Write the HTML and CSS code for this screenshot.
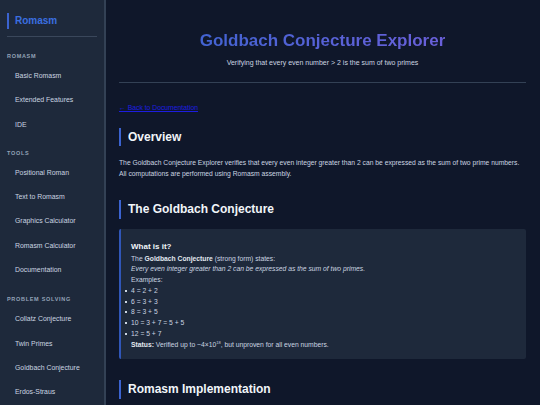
FILE: index.html
```html
<!DOCTYPE html>
<html lang="en">
<head>
<meta charset="utf-8">
<title>Goldbach Conjecture Explorer</title>
<link rel="stylesheet" href="styles.css">
</head>
<body>
<div class="app">
  <aside class="sidebar">
    <div class="brand">Romasm</div>
    <div class="group">
      <div class="group-label">Romasm</div>
      <a class="nav-item" href="#">Basic Romasm</a>
      <a class="nav-item" href="#">Extended Features</a>
      <a class="nav-item" href="#">IDE</a>
    </div>
    <div class="group">
      <div class="group-label">Tools</div>
      <a class="nav-item" href="#">Positional Roman</a>
      <a class="nav-item" href="#">Text to Romasm</a>
      <a class="nav-item" href="#">Graphics Calculator</a>
      <a class="nav-item" href="#">Romasm Calculator</a>
      <a class="nav-item" href="#">Documentation</a>
    </div>
    <div class="group">
      <div class="group-label">Problem Solving</div>
      <a class="nav-item" href="#">Collatz Conjecture</a>
      <a class="nav-item" href="#">Twin Primes</a>
      <a class="nav-item" href="#">Goldbach Conjecture</a>
      <a class="nav-item" href="#">Erdos-Straus</a>
    </div>
  </aside>
  <main class="main">
    <header class="page-header">
      <h1 class="title">Goldbach Conjecture Explorer</h1>
      <p class="subtitle">Verifying that every even number &gt; 2 is the sum of two primes</p>
    </header>
    <a class="back-link" href="#">← Back to Documentation</a>
    <h2 class="section-title first">Overview</h2>
    <p class="text">The Goldbach Conjecture Explorer verifies that every even integer greater than 2 can be expressed as the sum of two prime numbers. All computations are performed using Romasm assembly.</p>
    <h2 class="section-title">The Goldbach Conjecture</h2>
    <div class="info-box">
      <h3 class="info-title">What is it?</h3>
      <p class="info-line">The <strong>Goldbach Conjecture</strong> (strong form) states:</p>
      <p class="info-line"><em>Every even integer greater than 2 can be expressed as the sum of two primes.</em></p>
      <p class="info-line">Examples:</p>
      <ul class="examples">
        <li>4 = 2 + 2</li>
        <li>6 = 3 + 3</li>
        <li>8 = 3 + 5</li>
        <li>10 = 3 + 7 = 5 + 5</li>
        <li>12 = 5 + 7</li>
      </ul>
      <p class="info-line"><strong>Status:</strong> Verified up to ~4×10<sup>18</sup>, but unproven for all even numbers.</p>
    </div>
    <h2 class="section-title">Romasm Implementation</h2>
  </main>
</div>
</body>
</html>
```

FILE: styles.css
```css
* { box-sizing: border-box; }
html, body {
  margin: 0;
  padding: 0;
  height: 100%;
  overflow: hidden;
  background: #0f172a;
  font-family: "Liberation Sans", Arial, sans-serif;
}
.app {
  display: flex;
  height: 100vh;
}
.sidebar {
  width: 106px;
  flex: 0 0 106px;
  background: #1e293b;
  border-right: 2px solid #334155;
  padding: 13px 7px 0 7px;
  display: flex;
  flex-direction: column;
}
.brand {
  color: #3b6fe0;
  font-weight: bold;
  font-size: 10px;
  line-height: 16px;
  border-left: 2px solid #3b63d0;
  padding-left: 6px;
  margin-bottom: 7px;
}
.group {
  display: flex;
  flex-direction: column;
}
.brand + .group {
  border-top: 1px solid #3a475b;
  padding-top: 15px;
}
.group + .group { margin-top: 12px; }
.group:last-child { margin-top: 13px; }
.group-label {
  color: #94a3b8;
  font-size: 5.5px;
  font-weight: bold;
  letter-spacing: 0.7px;
  text-transform: uppercase;
  line-height: 8px;
  margin-bottom: 4px;
}
.nav-item {
  color: #cbd5e1;
  text-decoration: none;
  font-size: 6.9px;
  line-height: 24.3px;
  height: 24.3px;
  padding-left: 8px;
}
.main {
  flex: 1;
  padding: 0 14px 0 13px;
  color: #cbd5e1;
}
.page-header {
  text-align: center;
  padding-top: 31px;
  padding-bottom: 14px;
  border-bottom: 1px solid #334155;
}
.title {
  margin: 0;
  font-size: 17px;
  line-height: 20px;
  font-weight: bold;
  background: linear-gradient(90deg, #4263d2, #6a60da);
  -webkit-background-clip: text;
  background-clip: text;
  color: transparent;
  display: inline-block;
}
.subtitle {
  margin: 7px 0 0;
  font-size: 7px;
  line-height: 10px;
  color: #cbd5e1;
}
.back-link {
  display: inline-block;
  margin-top: 20px;
  font-size: 6.8px;
  line-height: 10px;
  color: #1d1de0;
}
.section-title {
  margin: 21px 0 0;
  color: #f1f5f9;
  font-size: 12px;
  line-height: 19px;
  font-weight: bold;
  border-left: 2px solid #3b63d0;
  padding-left: 7px;
}
.section-title.first {
  margin-top: 14px;
  line-height: 18px;
}
.text {
  margin: 11px 0 0;
  font-size: 6.75px;
  line-height: 11px;
  color: #cbd5e1;
}
.info-box {
  margin-top: 10px;
  background: #1e293b;
  border-left: 2px solid #3056b8;
  border-radius: 2px;
  padding: 12px 10px 9px 10px;
  font-size: 6.75px;
  color: #cbd5e1;
}
.info-title {
  margin: 0 0 1.5px;
  font-size: 8px;
  line-height: 11px;
  color: #f1f5f9;
  font-weight: bold;
}
.info-line {
  margin: 0;
  line-height: 10.75px;
}
.info-line strong { color: #e2e8f0; }
.info-line sup { font-size: 4px; line-height: 0; }
.examples {
  margin: 0;
  padding: 0;
  list-style: none;
}
.examples li {
  line-height: 10.75px;
}
.examples li::before {
  content: "";
  display: inline-block;
  width: 2px;
  height: 2px;
  background: #cbd5e1;
  margin-left: -6px;
  margin-right: 4px;
  vertical-align: middle;
}
```
